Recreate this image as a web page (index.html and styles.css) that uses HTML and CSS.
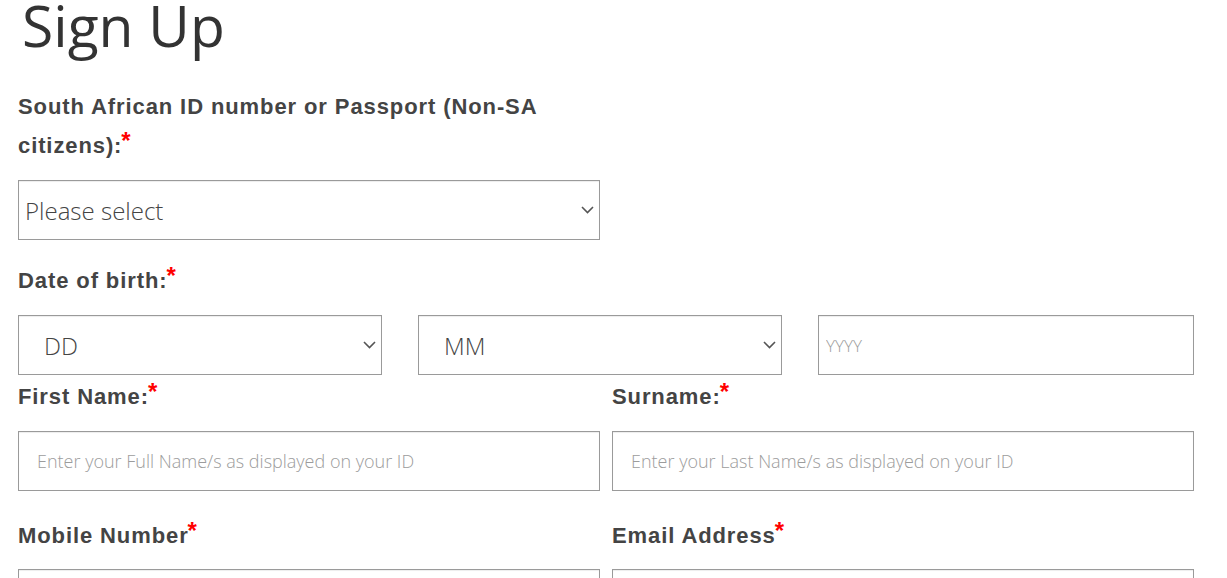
FILE: index.html
```html
<!DOCTYPE html>
<html lang="en">
<head>
<meta charset="utf-8">
<title>Sign Up</title>
<link rel="stylesheet" href="styles.css">
</head>
<body>
<main class="page">
  <h1 class="title">Sign Up</h1>

  <div class="group group-id">
    <label class="label">South African ID number or Passport (Non-SA citizens):<span class="req">*</span></label>
    <div class="select-wrap">
      <select class="field select"><option>Please select</option></select>
      <svg class="chev" width="13" height="8" viewBox="0 0 13 8"><path d="M1 1 L6.5 6.5 L12 1" fill="none" stroke="#555" stroke-width="1.6"/></svg>
    </div>
  </div>

  <div class="group group-dob">
    <label class="label">Date of birth:<span class="req">*</span></label>
    <div class="dob-row">
      <div class="select-wrap">
        <select class="field select select-dob"><option>DD</option></select>
        <svg class="chev" width="13" height="8" viewBox="0 0 13 8"><path d="M1 1 L6.5 6.5 L12 1" fill="none" stroke="#555" stroke-width="1.6"/></svg>
      </div>
      <div class="select-wrap">
        <select class="field select select-dob"><option>MM</option></select>
        <svg class="chev" width="13" height="8" viewBox="0 0 13 8"><path d="M1 1 L6.5 6.5 L12 1" fill="none" stroke="#555" stroke-width="1.6"/></svg>
      </div>
      <input class="field input input-year" type="text" placeholder="YYYY">
    </div>
  </div>

  <div class="two-col row-names">
    <div class="col">
      <label class="label">First Name:<span class="req">*</span></label>
      <input class="field input" type="text" placeholder="Enter your Full Name/s as displayed on your ID">
    </div>
    <div class="col">
      <label class="label">Surname:<span class="req">*</span></label>
      <input class="field input" type="text" placeholder="Enter your Last Name/s as displayed on your ID">
    </div>
  </div>

  <div class="two-col row-contact">
    <div class="col">
      <label class="label">Mobile Number<span class="req">*</span></label>
      <input class="field input" type="text">
    </div>
    <div class="col">
      <label class="label">Email Address<span class="req">*</span></label>
      <input class="field input" type="text">
    </div>
  </div>
</main>
</body>
</html>
```

FILE: styles.css
```css
html, body {
  margin: 0;
  padding: 0;
  background: #fff;
}

.page {
  width: 1176px;
  padding-left: 18px;
  font-family: "Liberation Sans", Arial, sans-serif;
  color: #444;
}

.title {
  margin: 0 0 37px 4px;
  font-family: "Open Sans", "Noto Sans", sans-serif;
  font-weight: 400;
  font-size: 57px;
  line-height: 50px;
  height: 50px;
  color: #333;
}

.label {
  display: block;
  font-weight: 700;
  font-size: 22px;
  letter-spacing: 0.9px;
  line-height: 39px;
  color: #444;
  margin-bottom: 15px;
}

.req {
  color: #f00;
  font-size: 24px;
  line-height: 0;
  letter-spacing: 0;
  position: relative;
  top: -4px;
  margin-left: -1px;
}

.group-id {
  width: 582px;
  margin-bottom: 21px;
}

.select-wrap {
  position: relative;
}

.field {
  display: block;
  box-sizing: border-box;
  width: 100%;
  height: 60px;
  margin: 0;
  border: 1px solid #9a9a9a;
  border-radius: 0;
  background: #fff;
  box-shadow: inset 0 1px 1px rgba(0, 0, 0, 0.075);
  outline: none;
}

.select {
  -webkit-appearance: none;
  appearance: none;
  font-family: "Open Sans", "Noto Sans", sans-serif;
  font-weight: 300;
  font-size: 24px;
  color: #444;
  padding: 0 30px 0 6px;
}

.select-dob {
  padding-left: 25px;
}

.chev {
  position: absolute;
  right: 6px;
  top: 26px;
  pointer-events: none;
}

.dob-row {
  display: grid;
  grid-template-columns: 364px 364px 376px;
  column-gap: 36px;
}

.input {
  font-family: "Open Sans", "Noto Sans", sans-serif;
  font-weight: 300;
  font-size: 18px;
  color: #444;
  padding: 0 18px;
}

.input::placeholder {
  color: #9c9c9c;
  opacity: 1;
}

.input-year {
  padding: 0 7px;
  font-size: 17px;
}

.two-col {
  display: grid;
  grid-template-columns: 582px 582px;
  column-gap: 12px;
}

.row-names {
  margin-top: 2px;
  margin-bottom: 25px;
}

.row-contact .label {
  margin-bottom: 14px;
}
```
